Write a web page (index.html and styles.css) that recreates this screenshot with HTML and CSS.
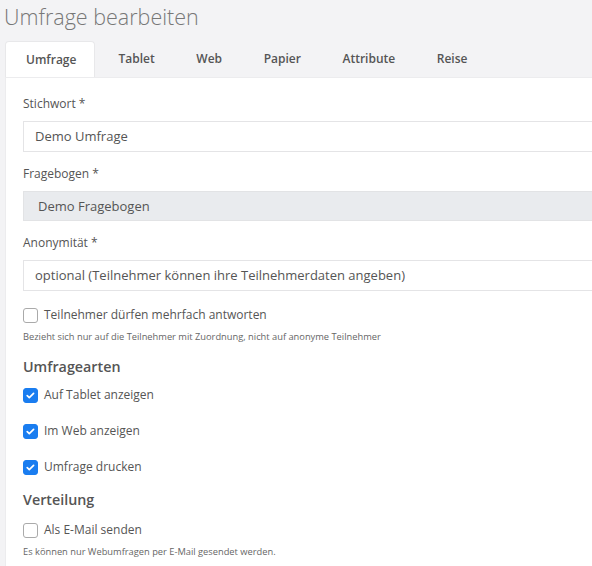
FILE: index.html
```html
<!DOCTYPE html>
<html lang="de">
<head>
<meta charset="utf-8">
<link rel="stylesheet" href="styles.css">
</head>
<body>
<h1 class="title">Umfrage bearbeiten</h1>
<div class="tabs">
  <div class="tab active">Umfrage</div>
  <div class="tab">Tablet</div>
  <div class="tab">Web</div>
  <div class="tab">Papier</div>
  <div class="tab">Attribute</div>
  <div class="tab">Reise</div>
</div>
<div class="card">
  <div class="field">
    <div class="label">Stichwort *</div>
    <div class="input">Demo Umfrage</div>
  </div>
  <div class="field">
    <div class="label">Fragebogen *</div>
    <div class="input disabled">Demo Fragebogen</div>
  </div>
  <div class="field">
    <div class="label">Anonymität *</div>
    <div class="input">optional (Teilnehmer können ihre Teilnehmerdaten angeben)</div>
  </div>
  <div class="check first"><span class="box"></span><span>Teilnehmer dürfen mehrfach antworten</span></div>
  <div class="help">Bezieht sich nur auf die Teilnehmer mit Zuordnung, nicht auf anonyme Teilnehmer</div>
  <h2 class="heading">Umfragearten</h2>
  <div class="check"><span class="box checked"><svg viewBox="0 0 16 16" width="15" height="15"><path d="M4.5 8.2l2.2 2.1 4.6-4.6" fill="none" stroke="#fff" stroke-width="1.8" stroke-linecap="round" stroke-linejoin="round"/></svg></span><span>Auf Tablet anzeigen</span></div>
  <div class="check spaced"><span class="box checked"><svg viewBox="0 0 16 16" width="15" height="15"><path d="M4.5 8.2l2.2 2.1 4.6-4.6" fill="none" stroke="#fff" stroke-width="1.8" stroke-linecap="round" stroke-linejoin="round"/></svg></span><span>Im Web anzeigen</span></div>
  <div class="check spaced"><span class="box checked"><svg viewBox="0 0 16 16" width="15" height="15"><path d="M4.5 8.2l2.2 2.1 4.6-4.6" fill="none" stroke="#fff" stroke-width="1.8" stroke-linecap="round" stroke-linejoin="round"/></svg></span><span>Umfrage drucken</span></div>
  <h2 class="heading second">Verteilung</h2>
  <div class="check"><span class="box"></span><span>Als E-Mail senden</span></div>
  <div class="help">Es können nur Webumfragen per E-Mail gesendet werden.</div>
</div>
</body>
</html>
```
FILE: styles.css
```css
html, body {
  margin: 0;
  padding: 0;
  background: #f3f3f5;
  overflow: hidden;
  font-family: "Open Sans", "Noto Sans", sans-serif;
  color: #555;
}
body {
  width: 592px;
  height: 566px;
}
.title {
  margin: 0;
  padding: 2px 0 0 4px;
  height: 35px;
  font-size: 21.5px;
  font-weight: 300;
  line-height: 30px;
  color: #777;
}
.tabs {
  display: flex;
  margin-top: 4px;
  padding-left: 5px;
  height: 36px;
}
.tab {
  padding: 0 20.8px;
  font-size: 12px;
  font-weight: 600;
  line-height: 36px;
  color: #555;
  border-radius: 4px 4px 0 0;
}
.tab.active {
  background: #fff;
  border: 1px solid #e8e8ea;
  border-bottom: none;
  padding: 0 20px;
  width: 90px;
  margin-right: 2.7px;
  text-align: center;
  height: 36px;
  box-sizing: border-box;
  line-height: 35px;
}
.card {
  margin-left: 5px;
  width: 620px;
  height: 500px;
  background: #fff;
  border-left: 1px solid #ececee;
  border-top: 1px solid #ececee;
  padding: 17px 0 0 17px;
  box-sizing: border-box;
}
.field {
  margin-bottom: 13px;
}
.label {
  font-size: 12px;
  line-height: 18px;
  color: #555;
  margin-bottom: 8px;
}
.input {
  height: 31px;
  box-sizing: border-box;
  border: 1px solid #e4e4e6;
  padding: 0 11px;
  font-size: 13px;
  line-height: 29px;
  color: #555;
  width: 620px;
}
.input.disabled {
  background: #e9ebee;
  border-color: #e2e3e5;
  padding-left: 14px;
  height: 30px;
  line-height: 28px;
}
.check {
  display: flex;
  align-items: center;
  gap: 6px;
  font-size: 12px;
  line-height: 18px;
  color: #555;
  height: 18px;
}
.check.first {
  margin-top: 15px;
}
.check.spaced {
  margin-top: 18px;
}
.box {
  width: 15px;
  height: 15px;
  box-sizing: border-box;
  border: 1px solid #aaa;
  border-radius: 3px;
  display: inline-flex;
  flex: none;
}
.box.checked {
  background: #1a7df0;
  border-color: #1a7df0;
}
.box.checked svg {
  margin: -1px;
}
.help {
  font-size: 9.3px;
  line-height: 14px;
  color: #666;
  margin-top: 6px;
}
.heading {
  margin: 12px 0 8px;
  font-size: 14.3px;
  font-weight: 600;
  line-height: 22px;
  color: #555;
}
.heading.second {
  margin-top: 13px;
  margin-bottom: 10px;
}
```
